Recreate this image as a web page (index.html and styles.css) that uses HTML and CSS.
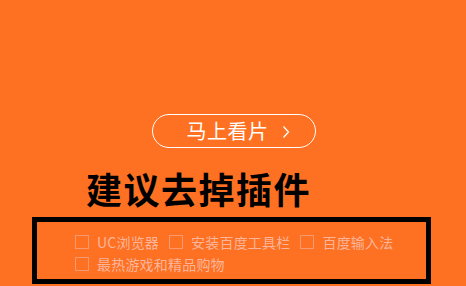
FILE: index.html
```html
<!DOCTYPE html>
<html lang="zh">
<head>
<meta charset="utf-8">
<link rel="stylesheet" href="styles.css">
</head>
<body>
<div class="page">
  <div class="btn-wrap">
    <a class="btn"><span class="btn-text">马上看片</span><svg class="chev" width="8" height="14" viewBox="0 0 8 14"><path d="M1.5 1.5 L6.5 7 L1.5 12.5" fill="none" stroke="#fff" stroke-width="1.3"/></svg></a>
  </div>
  <h1 class="title">建议去掉插件</h1>
  <div class="box">
    <div class="opts">
      <label class="opt"><span class="cb"></span><span>UC浏览器</span></label>
      <label class="opt"><span class="cb"></span><span>安装百度工具栏</span></label>
      <label class="opt"><span class="cb"></span><span>百度输入法</span></label>
      <label class="opt"><span class="cb"></span><span>最热游戏和精品购物</span></label>
    </div>
  </div>
</div>
</body>
</html>
```
FILE: styles.css
```css
html, body {
  margin: 0;
  padding: 0;
  background: #fe7122;
  font-family: "Noto Sans CJK SC", "Noto Sans", sans-serif;
}
.page {
  width: 466px;
  height: 286px;
  padding-top: 114px;
  box-sizing: border-box;
  overflow: hidden;
}
.btn-wrap {
  display: flex;
  justify-content: center;
  padding-left: 1px;
}
.btn {
  width: 164px;
  height: 34px;
  box-sizing: border-box;
  border: 1px solid #fff;
  border-radius: 17px;
  color: #fff;
  font-size: 20px;
  line-height: 32px;
  display: flex;
  align-items: center;
  justify-content: center;
  padding-left: 9px;
}
.btn-text {
  letter-spacing: 0.5px;
}
.chev {
  margin-left: 13px;
  margin-top: 1px;
}
.title {
  margin: 22px 0 0 0;
  padding-left: 86px;
  font-size: 36px;
  line-height: 36px;
  font-weight: bold;
  letter-spacing: 1.5px;
  color: #000;
}
.box {
  margin: 11px 0 0 32px;
  width: 399px;
  height: 67px;
  box-sizing: border-box;
  border: 5px solid #000;
  padding: 9px 0 0 38px;
}
.opts {
  display: flex;
  flex-wrap: wrap;
  column-gap: 10px;
}
.opt {
  display: flex;
  align-items: center;
  height: 22px;
  font-size: 14px;
  letter-spacing: 0.2px;
  color: #fab59c;
}
.cb {
  width: 14px;
  height: 14px;
  box-sizing: border-box;
  border: 1px solid #f79a72;
  margin-right: 8px;
}
```
